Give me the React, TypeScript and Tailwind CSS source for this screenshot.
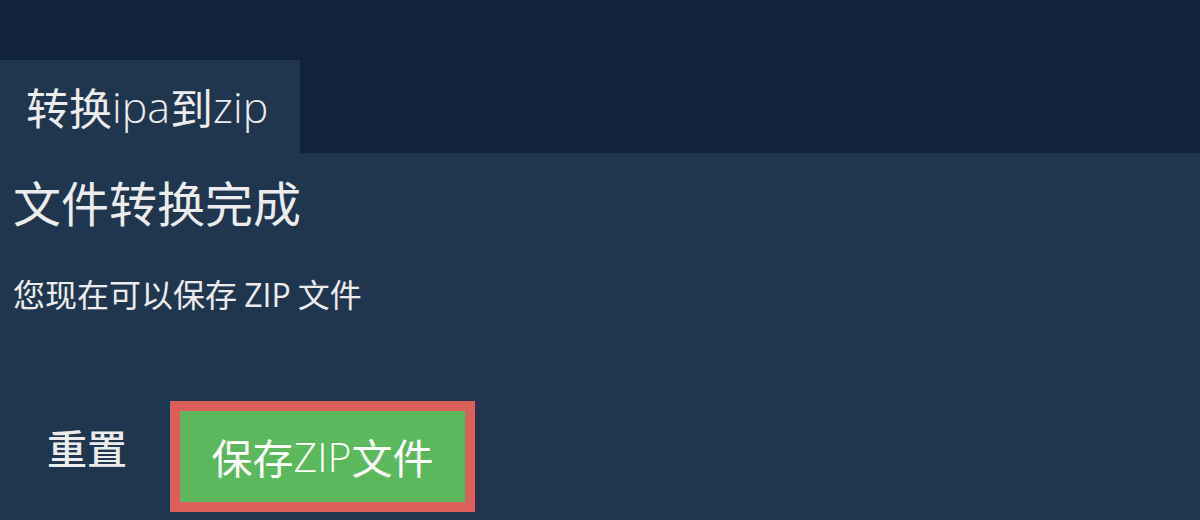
const latin = "font-['Open_Sans',sans-serif] font-light";

export default function App() {
  return (
    <div
      className="w-full h-[520px] overflow-hidden bg-[#10233a] flex flex-col"
      style={{ fontFamily: '"Noto Sans CJK SC", "Noto Sans", sans-serif' }}
    >
      <div className="h-[60px] shrink-0" />
      <div className="flex h-[93px] shrink-0">
        <div className="w-[300px] bg-[#20364e] flex items-center pl-[26px] text-[43px] leading-[43px] text-[#ececec]">
          转换<span className={latin}>ipa</span>到<span className={latin}>zip</span>
        </div>
      </div>
      <div className="flex-1 bg-[#20364e] px-[13px] pt-[24px] text-[#ececec]">
        <h2 className="text-[48px] leading-[48px] font-normal">文件转换完成</h2>
        <p className="mt-[52px] text-[32px] leading-[32px] font-normal">
          您现在可以保存 <span className="font-['Open_Sans',sans-serif] font-medium">ZIP</span> 文件
        </p>
        <div className="mt-[90px] flex items-start">
          <button className="px-[34px] pt-[26px] text-[40px] leading-[40px] font-medium text-[#ececec]">
            重置
          </button>
          <button className="ml-[9px] border-[10px] border-[#dc605a] bg-[#5cb85c] w-[305px] h-[111px] flex items-center justify-center text-[41px] leading-[41px] text-white">
            保存<span className={latin}>ZIP</span>文件
          </button>
        </div>
      </div>
    </div>
  );
}
